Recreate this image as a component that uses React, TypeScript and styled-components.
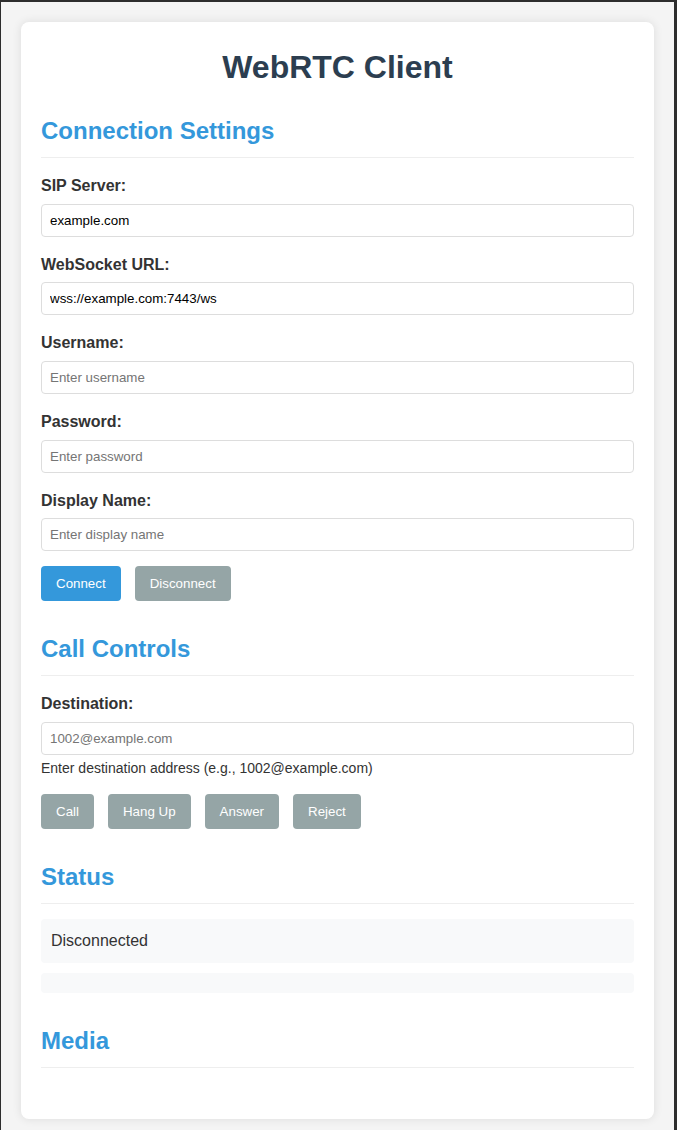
import React from "react";
import styled, { createGlobalStyle } from "styled-components";

const GlobalStyle = createGlobalStyle`
  html, body {
    margin: 0;
    padding: 0;
  }

  body {
    font-family: "Liberation Sans", Arial, sans-serif;
    line-height: 1.6;
    color: #333;
    background: #f4f4f4;
  }

  * {
    box-sizing: border-box;
  }
`;

const Frame = styled.div`
  min-height: 100vh;
  background: #f4f4f4;
  border-top: 2px solid #2d2d2d;
  border-left: 1px solid #2d2d2d;
  border-right: 3px solid #2d2d2d;
  padding: 20px;
`;

const Container = styled.div`
  max-width: 800px;
  margin: 0 auto;
  background: #fff;
  padding: 20px;
  border-radius: 8px;
  box-shadow: 0 0 10px rgba(0, 0, 0, 0.1);
`;

const Title = styled.h1`
  margin: 0 0 22px;
  font-size: 32px;
  line-height: 1.6;
  text-align: center;
  color: #2c3e50;
`;

const Section = styled.section<{ $last?: boolean }>`
  margin-bottom: ${(p) => (p.$last ? "31px" : "32px")};
`;

const SectionTitle = styled.h2<{ $tight?: boolean }>`
  margin: 0 0 ${(p) => (p.$tight ? "0" : "15px")};
  font-size: 24px;
  line-height: 32px;
  color: #3498db;
  padding-bottom: 10px;
  border-bottom: 1px solid #eee;
`;

const FormGroup = styled.div`
  margin-bottom: 15px;
`;

const Label = styled.label`
  display: block;
  margin-bottom: 5px;
  font-size: 16px;
  font-weight: bold;
  color: #333;
`;

const Input = styled.input`
  display: block;
  width: 100%;
  height: 33px;
  padding: 8px;
  font-family: "Liberation Sans", Arial, sans-serif;
  font-size: 13.33px;
  color: #000;
  border: 1px solid #ddd;
  border-radius: 4px;
  background: #fff;

  &::placeholder {
    color: #757575;
  }
`;

const Help = styled.small`
  display: block;
  margin-top: 3px;
  font-size: 14px;
  line-height: 1.5;
  color: #333;
`;

const ButtonRow = styled.div`
  display: flex;
  gap: 14px;
`;

const Button = styled.button<{ $primary?: boolean }>`
  height: 35px;
  padding: 10px 15px;
  font-family: "Liberation Sans", Arial, sans-serif;
  font-size: 13.33px;
  line-height: 15px;
  color: #fff;
  background: ${(p) => (p.$primary ? "#3498db" : "#95a5a6")};
  border: none;
  border-radius: 4px;
  cursor: ${(p) => (p.$primary ? "pointer" : "not-allowed")};
`;

const StatusBox = styled.div`
  margin-bottom: 10px;
  padding: 10px;
  font-size: 16px;
  line-height: 24px;
  background: #f8f9fa;
  border-radius: 4px;
  color: #333;
`;

const EmptyBox = styled.div`
  height: 20px;
  background: #f8f9fa;
  border-radius: 4px;
`;

const fields = [
  { id: "server", label: "SIP Server:", value: "example.com" },
  { id: "ws", label: "WebSocket URL:", value: "wss://example.com:7443/ws" },
  { id: "user", label: "Username:", placeholder: "Enter username" },
  { id: "pass", label: "Password:", placeholder: "Enter password" },
  { id: "display", label: "Display Name:", placeholder: "Enter display name" },
];

export default function App() {
  return (
    <>
      <GlobalStyle />
      <Frame>
        <Container>
          <Title>WebRTC Client</Title>

          <Section>
            <SectionTitle>Connection Settings</SectionTitle>
            {fields.map((f) => (
              <FormGroup key={f.id}>
                <Label htmlFor={f.id}>{f.label}</Label>
                <Input id={f.id} defaultValue={f.value} placeholder={f.placeholder} />
              </FormGroup>
            ))}
            <ButtonRow>
              <Button $primary>Connect</Button>
              <Button>Disconnect</Button>
            </ButtonRow>
          </Section>

          <Section>
            <SectionTitle>Call Controls</SectionTitle>
            <FormGroup>
              <Label htmlFor="dest">Destination:</Label>
              <Input id="dest" placeholder="1002@example.com" />
              <Help>Enter destination address (e.g., 1002@example.com)</Help>
            </FormGroup>
            <ButtonRow>
              <Button>Call</Button>
              <Button>Hang Up</Button>
              <Button>Answer</Button>
              <Button>Reject</Button>
            </ButtonRow>
          </Section>

          <Section>
            <SectionTitle>Status</SectionTitle>
            <StatusBox>Disconnected</StatusBox>
            <EmptyBox />
          </Section>

          <Section $last>
            <SectionTitle $tight>Media</SectionTitle>
          </Section>
        </Container>
      </Frame>
    </>
  );
}
